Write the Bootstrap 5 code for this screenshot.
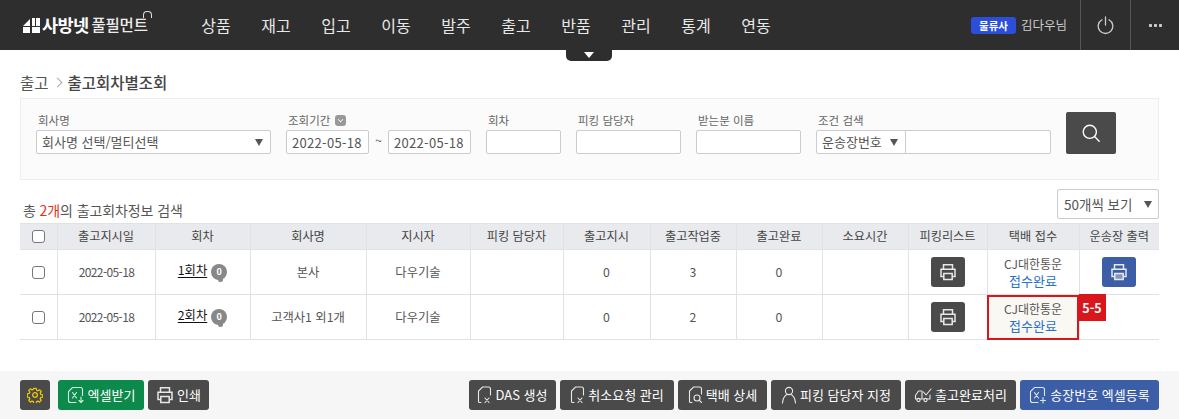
<!DOCTYPE html>
<html lang="ko">
<head>
<meta charset="utf-8">
<title>출고회차별조회</title>
<link href="https://cdn.jsdelivr.net/npm/bootstrap@5.3.0/dist/css/bootstrap.min.css" rel="stylesheet">
<style>
html,body{height:419px;overflow:hidden}
body{font-family:"Noto Sans CJK KR","Noto Sans",sans-serif;font-size:12px;color:#555;background:#fff}
.page-wrap{height:419px}
.top-bar{height:50px;background:#2e2e2e;color:#fff;padding:0}
.logo-box{width:190px;padding-left:23px;gap:2px}
.logo-main{font-size:17.5px;font-weight:700;letter-spacing:-.6px;line-height:1}
.logo-sub{font-size:15.5px;font-weight:500;letter-spacing:-.2px;line-height:1;color:#ececec;position:relative;margin-left:1px}
.logo-sub::after{content:"";position:absolute;right:-4px;top:-6px;width:9px;height:7px;border:1px solid #ddd;border-bottom:0;border-radius:4px 4px 0 0}
.main-menu{margin-left:-4px}
.main-menu .nav-link{width:60px;padding:0;text-align:center;font-size:16px;color:#e8e8e8;line-height:50px;white-space:nowrap}
.corp-tag{width:45px;height:17px;background:#2b4fd8;color:#fff;border-radius:3px;font-size:10.5px;font-weight:700;line-height:17px;text-align:center}
.user-name{font-size:12.5px;color:#ccc;margin-left:5px;margin-right:13px;white-space:nowrap}
.bar-cell{width:50px;height:50px;border-left:1px solid #555}
.bar-cell.last-cell{width:49px}
.menu-tab{position:absolute;left:566px;top:50px;width:46px;height:11px;background:#2e2e2e;border-radius:0 0 5px 5px}
.menu-tab::after{content:"";position:absolute;left:18px;top:2px;border-left:5px solid transparent;border-right:5px solid transparent;border-top:6px solid #fff}
.crumbs{padding:21px 20px 0;height:48px;font-size:15.5px;color:#555;line-height:22px;gap:5px}
.crumbs strong{font-weight:500;color:#444}
.crumb-sep{width:7px;height:7px;border-top:1px solid #aaa;border-right:1px solid #aaa;transform:rotate(45deg);margin-right:2px}
.search-box{margin:0 20px;height:82px;background:#fbfbfb;border:1px solid #eee;padding:12px 15px 0;gap:15px}
.search-box label{display:block;font-size:11.5px;line-height:19px;color:#666;white-space:nowrap;padding-left:2px}
.date-mark{display:inline-block;width:11px;height:11px;background:#999;border-radius:3px;vertical-align:-1px;margin-left:1px;position:relative}
.date-mark::after{content:"";position:absolute;left:3px;top:2px;width:5px;height:5px;border-right:1px solid #fff;border-bottom:1px solid #fff;transform:rotate(45deg) scale(.8)}
.fld{height:24px;border:1px solid #ccc;border-radius:2px;background-color:#fff;font-size:13px;color:#555;padding:0 5px;box-shadow:none;line-height:22px;min-height:0}
.form-select.fld{padding:0 5px;background-image:url("data:image/svg+xml,%3Csvg xmlns='http://www.w3.org/2000/svg' width='8' height='7'%3E%3Cpath d='M0 0h8L4 7z' fill='%23555'/%3E%3C/svg%3E");background-size:8px 7px;background-position:right 7px center}
.w-corp{width:235px}.w-date{width:83px;letter-spacing:.3px;font-size:13px}.w-round{width:75px}.w-pick{width:105px}.w-recv{width:105px}.w-cond{width:90px;border-radius:2px 0 0 2px}.w-kw{width:146px;margin-left:-1px;border-radius:0 2px 2px 0}
.tilde{width:19px;text-align:center;line-height:20px}
.date-pair{display:flex}
.find-btn{width:50px;height:42px;background:#4a4a4a;border:0;border-radius:2px;margin-top:1px;padding:0}
.find-btn:hover{background:#4a4a4a}
.list-head{height:43px;margin:0 20px}
.count-line{padding-left:3px;font-size:14px;line-height:18px;padding-bottom:4px;letter-spacing:-.1px}
.count-line em{font-style:normal;color:#e0301e}
.page-size{width:102px;height:30px;border:1px solid #ccc;border-radius:2px;font-size:13.5px;color:#555;padding:0 6px;margin-bottom:4px;background-image:url("data:image/svg+xml,%3Csvg xmlns='http://www.w3.org/2000/svg' width='8' height='7'%3E%3Cpath d='M0 0h8L4 7z' fill='%23555'/%3E%3C/svg%3E");background-size:8px 7px;background-position:right 6px center}
.grid-wrap{margin:0 20px}
.order-grid{table-layout:fixed;width:1139px;margin:0;border-color:#e2e2e2;--bs-table-color:#555;--bs-table-border-color:#e2e2e2}
.order-grid th{height:26px;background:#e9eaee;font-weight:400;font-size:12.2px;color:#444;padding:0;text-align:center;vertical-align:middle;border:1px solid #e2e2e2;border-left-color:#dcdcdc;white-space:nowrap}
.order-grid td{height:45px;padding:0;text-align:center;vertical-align:middle;border:1px solid #e2e2e2;font-size:12.3px;color:#555;position:relative}
.order-grid tr>:first-child{border-left:0}
.order-grid tr>:last-child{border-right:0}
.order-grid .form-check-input{width:13px;height:13px;margin:0;border:1px solid #777;border-radius:3px;display:block;margin:0 auto}
.order-grid td.date-txt{letter-spacing:-.6px;font-size:12px;padding-left:1px}
.round-link{color:#111;text-decoration:underline;text-underline-offset:2px;position:relative;top:-2px}
.talk-mark{display:inline-block;width:16px;height:16px;border-radius:50%;background:#888;color:#fff;font-size:9px;font-weight:700;line-height:16px;margin-left:4px;position:relative;top:-2px}
.talk-mark::after{content:"";position:absolute;left:7px;bottom:-2px;width:5px;height:4px;background:#888;border-radius:0 0 3px 3px}
.mini-btn{width:34px;height:30px;background:#4a4a4a;border:0;border-radius:3px;padding:0;display:inline-flex;align-items:center;justify-content:center;vertical-align:middle}
.mini-btn:hover{background:#4a4a4a}
.mini-btn.blue-btn,.mini-btn.blue-btn:hover{background:#3b5ea6}
.carrier{line-height:17px;display:block;font-size:12px}
.carrier a{color:#2a72c8;text-decoration:none;display:block;font-size:13px}
.order-grid td.flagged{background:#faf8f3;outline:2px solid #d9161c;outline-offset:-2px}
.flag-tag{position:absolute;left:100%;top:-1px;width:27px;height:27px;background:#d9161c;color:#fff;font-weight:700;font-size:12.5px;line-height:27px;text-align:center;z-index:2}
.action-bar{height:48px;background:#f6f6f6;padding:9px 20px;margin-top:auto}
.act-btn{height:30px;background:#4a4a4a;border:0;border-radius:3px;color:#fff;font-size:13px;padding:0;gap:3px;white-space:nowrap;line-height:30px}
.act-btn:hover{background:#4a4a4a;color:#fff}
.act-btn.go-green,.act-btn.go-green:hover{background:#0b8a4c}
.act-btn.go-blue,.act-btn.go-blue:hover{background:#3b5ea6}
.b-gear{width:30px}.b-xls{width:86px}.b-prt{width:61px}.b-das{width:87px}.b-cancel{width:114px}.b-detail{width:89px}.b-pick{width:130px}.b-done{width:111px}.b-upload{width:139px}
.act-left{gap:4px}.act-right{gap:4px}
.act-left .b-gear{margin-right:4px}
svg{display:block;flex:none}
</style>
</head>
<body>
<div class="page-wrap d-flex flex-column position-relative">
  <nav class="top-bar d-flex align-items-center">
    <div class="logo-box d-flex align-items-center">
      <svg width="17" height="15" viewBox="0 0 17 15"><path d="M0 15V9h7v6zM9 15V9h8v6zM0 8 7 1v7zM9 8V0h3v8zM13 8V0h4v8z" fill="#fff"/></svg>
      <span class="logo-main">사방넷</span><span class="logo-sub">풀필먼트</span>
    </div>
    <ul class="nav main-menu flex-nowrap">
      <li class="nav-item"><a class="nav-link" href="#">상품</a></li>
      <li class="nav-item"><a class="nav-link" href="#">재고</a></li>
      <li class="nav-item"><a class="nav-link" href="#">입고</a></li>
      <li class="nav-item"><a class="nav-link" href="#">이동</a></li>
      <li class="nav-item"><a class="nav-link" href="#">발주</a></li>
      <li class="nav-item"><a class="nav-link" href="#">출고</a></li>
      <li class="nav-item"><a class="nav-link" href="#">반품</a></li>
      <li class="nav-item"><a class="nav-link" href="#">관리</a></li>
      <li class="nav-item"><a class="nav-link" href="#">통계</a></li>
      <li class="nav-item"><a class="nav-link" href="#">연동</a></li>
    </ul>
    <div class="ms-auto d-flex align-items-center">
      <span class="corp-tag">물류사</span>
      <span class="user-name">김다우님</span>
      <div class="bar-cell d-flex align-items-center justify-content-center">
        <svg width="17" height="19" viewBox="0 0 17 19" fill="none" stroke="#ccc" stroke-width="1.3" stroke-linecap="round"><path d="M8.5 1v8M5 3.8a7.3 7.3 0 1 0 7 0"/></svg>
      </div>
      <div class="bar-cell last-cell d-flex align-items-center justify-content-center">
        <svg width="13" height="3" viewBox="0 0 13 3" fill="#ccc"><rect width="3" height="3" rx=".7"/><rect x="5" width="3" height="3" rx=".7"/><rect x="10" width="3" height="3" rx=".7"/></svg>
      </div>
    </div>
  </nav>
  <div class="menu-tab"></div>

  <div class="crumbs d-flex align-items-start">
    <span>출고</span><span class="crumb-sep mt-2"></span><strong>출고회차별조회</strong>
  </div>

  <form class="search-box d-flex" onsubmit="return false">
    <div>
      <label>회사명</label>
      <select class="form-select fld w-corp"><option>회사명 선택/멀티선택</option></select>
    </div>
    <div>
      <label>조회기간 <span class="date-mark"></span></label>
      <div class="date-pair">
        <input class="form-control fld w-date" value="2022-05-18"><span class="tilde">~</span><input class="form-control fld w-date" value="2022-05-18">
      </div>
    </div>
    <div><label>회차</label><input class="form-control fld w-round"></div>
    <div><label>피킹 담당자</label><input class="form-control fld w-pick"></div>
    <div><label>받는분 이름</label><input class="form-control fld w-recv"></div>
    <div>
      <label>조건 검색</label>
      <div class="d-flex">
        <select class="form-select fld w-cond"><option>운송장번호</option></select><input class="form-control fld w-kw">
      </div>
    </div>
    <button class="btn find-btn d-flex align-items-center justify-content-center" aria-label="검색">
      <svg width="18" height="18" viewBox="0 0 18 18" fill="none" stroke="#fff" stroke-width="1.4" stroke-linecap="round"><circle cx="7.8" cy="7.8" r="6.6"/><path d="m12.8 12.8 4.4 4.4"/></svg>
    </button>
  </form>

  <div class="list-head d-flex align-items-end justify-content-between">
    <div class="count-line">총 <em>2개</em>의 출고회차정보 검색</div>
    <select class="form-select page-size"><option>50개씩 보기</option></select>
  </div>

  <div class="grid-wrap">
    <table class="table order-grid">
      <colgroup>
        <col style="width:37px"><col style="width:98px"><col style="width:95px"><col style="width:116px"><col style="width:104px"><col style="width:93px"><col style="width:87px"><col style="width:86px"><col style="width:86px"><col style="width:86px"><col style="width:79px"><col style="width:92px"><col style="width:80px">
      </colgroup>
      <thead>
        <tr>
          <th><input class="form-check-input" type="checkbox" aria-label="전체선택"></th>
          <th>출고지시일</th><th>회차</th><th>회사명</th><th>지시자</th><th>피킹 담당자</th><th>출고지시</th><th>출고작업중</th><th>출고완료</th><th>소요시간</th><th>피킹리스트</th><th>택배 접수</th><th>운송장 출력</th>
        </tr>
      </thead>
      <tbody>
        <tr>
          <td><input class="form-check-input" type="checkbox" aria-label="선택"></td>
          <td class="date-txt">2022-05-18</td>
          <td><a class="round-link" href="#">1회차</a><span class="talk-mark">0</span></td>
          <td>본사</td><td>다우기술</td><td></td><td>0</td><td>3</td><td>0</td><td></td>
          <td><button class="btn mini-btn" aria-label="피킹리스트 인쇄"><svg width="18" height="18" viewBox="0 0 18 18" fill="none" stroke="#e8e8e8" stroke-width="1.5"><path d="M4.5 6V1.8h9V6M4.5 13.5H2V6.2h14v7.3h-2.5"/><rect x="4.8" y="10.5" width="8.4" height="6" fill="#4a4a4a"/></svg></button></td>
          <td><span class="carrier">CJ대한통운<a href="#">접수완료</a></span></td>
          <td><button class="btn mini-btn blue-btn" aria-label="운송장 인쇄"><svg width="18" height="18" viewBox="0 0 18 18" fill="none" stroke="#e8e8e8" stroke-width="1.5"><path d="M4.5 6V1.8h9V6M4.5 13.5H2V6.2h14v7.3h-2.5"/><rect x="4.8" y="10.5" width="8.4" height="6" fill="#7f96c6"/></svg></button></td>
        </tr>
        <tr>
          <td><input class="form-check-input" type="checkbox" aria-label="선택"></td>
          <td class="date-txt">2022-05-18</td>
          <td><a class="round-link" href="#">2회차</a><span class="talk-mark">0</span></td>
          <td>고객사1 외1개</td><td>다우기술</td><td></td><td>0</td><td>2</td><td>0</td><td></td>
          <td><button class="btn mini-btn" aria-label="피킹리스트 인쇄"><svg width="18" height="18" viewBox="0 0 18 18" fill="none" stroke="#e8e8e8" stroke-width="1.5"><path d="M4.5 6V1.8h9V6M4.5 13.5H2V6.2h14v7.3h-2.5"/><rect x="4.8" y="10.5" width="8.4" height="6" fill="#4a4a4a"/></svg></button></td>
          <td class="flagged"><span class="carrier">CJ대한통운<a href="#">접수완료</a></span><span class="flag-tag">5-5</span></td>
          <td></td>
        </tr>
      </tbody>
    </table>
  </div>

  <div class="action-bar d-flex justify-content-between">
    <div class="act-left d-flex">
      <button class="btn act-btn b-gear d-flex align-items-center justify-content-center" aria-label="설정">
        <svg width="16" height="16" viewBox="0 0 16 16" fill="none" stroke="#f0c800" stroke-width="1.3" stroke-linejoin="round"><circle cx="8" cy="8" r="2.3"/><path d="M6.7 1h2.6l.4 2 1.4.6 1.7-1.1 1.8 1.8-1.1 1.7.6 1.4 2 .4v2.4l-2 .4-.6 1.4 1.1 1.7-1.8 1.8-1.7-1.1-1.4.6-.4 2H6.7l-.4-2-1.4-.6-1.7 1.1-1.8-1.8 1.1-1.7-.6-1.4-2-.4V6.8l2-.4.6-1.4-1.1-1.7 1.8-1.8 1.7 1.1 1.4-.6z" transform="translate(.4 .4) scale(.95)"/></svg>
      </button>
      <button class="btn act-btn go-green b-xls d-flex align-items-center justify-content-center">
        <svg width="18" height="18" viewBox="0 0 18 18" fill="none" stroke="#dfeee6" stroke-width="1.1" stroke-linecap="round"><path d="M9 16.5H3.5a2 2 0 0 1-2-2v-9l4-4h8a2 2 0 0 1 2 2v6"/><path d="m5.5 6.5 4 5.5M9.5 6.5l-4 5.500M14 11v5.500M12 14.500l2 2 2-2"/></svg>
        <span>엑셀받기</span>
      </button>
      <button class="btn act-btn b-prt d-flex align-items-center justify-content-center">
        <svg width="18" height="18" viewBox="0 0 18 18" fill="none" stroke="#e8e8e8" stroke-width="1.5"><path d="M4.5 6V1.8h9V6M4.5 13.5H2V6.2h14v7.3h-2.5"/><rect x="4.8" y="10.5" width="8.4" height="6" fill="#4a4a4a"/></svg>
        <span>인쇄</span>
      </button>
    </div>
    <div class="act-right d-flex">
      <button class="btn act-btn b-das d-flex align-items-center justify-content-center">
        <svg width="15" height="18" viewBox="0 0 15 18" fill="none" stroke="#e8e8e8" stroke-width="1.1" stroke-linecap="round"><path d="M4 16.5H2.5a1 1 0 0 1-1-1V5l4-4h6a2 2 0 0 1 2 2v6"/><path d="m8 12 4 4.5M12 12l-4 4.5"/></svg>
        <span>DAS 생성</span>
      </button>
      <button class="btn act-btn b-cancel d-flex align-items-center justify-content-center">
        <svg width="15" height="18" viewBox="0 0 15 18" fill="none" stroke="#e8e8e8" stroke-width="1.1" stroke-linecap="round"><path d="M4 16.5H2.5a1 1 0 0 1-1-1V5l4-4h6a2 2 0 0 1 2 2v6"/><path d="m8 12 4 4.5M12 12l-4 4.5"/></svg>
        <span>취소요청 관리</span>
      </button>
      <button class="btn act-btn b-detail d-flex align-items-center justify-content-center">
        <svg width="15" height="18" viewBox="0 0 15 18" fill="none" stroke="#e8e8e8" stroke-width="1.1" stroke-linecap="round"><path d="M4 16.5H2.5a1 1 0 0 1-1-1V5l4-4h6a2 2 0 0 1 2 2v5"/><circle cx="9" cy="12" r="3"/><path d="m11.2 14.2 2.3 2.3"/></svg>
        <span>택배 상세</span>
      </button>
      <button class="btn act-btn b-pick d-flex align-items-center justify-content-center">
        <svg width="16" height="18" viewBox="0 0 16 18" fill="none" stroke="#e8e8e8" stroke-width="1.1" stroke-linecap="round"><circle cx="8" cy="5" r="3.6"/><path d="M1.5 17c.3-4 2-7 4-8.300M14.5 17c-.3-4-2-7-4-8.300"/></svg>
        <span>피킹 담당자 지정</span>
      </button>
      <button class="btn act-btn b-done d-flex align-items-center justify-content-center">
        <svg width="18" height="18" viewBox="0 0 18 18" fill="none" stroke="#e8e8e8" stroke-width="1.1" stroke-linecap="round" stroke-linejoin="round"><path d="M3 13H1.5V9.5L4.5 5H8v8H6"/><circle cx="4.5" cy="14" r="1.6"/><circle cx="11.5" cy="14" r="1.6"/><path d="M9 13h1M13 13h3V9"/><path d="m9.500 6 2.500 3 5-6"/></svg>
        <span>출고완료처리</span>
      </button>
      <button class="btn act-btn go-blue b-upload d-flex align-items-center justify-content-center">
        <svg width="18" height="18" viewBox="0 0 18 18" fill="none" stroke="#dfe6f3" stroke-width="1.1" stroke-linecap="round"><path d="M9 16.5H3.500a2 2 0 0 1-2-2v-9l4-4h8a2 2 0 0 1 2 2v6"/><path d="m5.5 6.5 4 5.500M9.5 6.5l-4 5.500M14 11.500v5.500M11.500 14.500h5"/></svg>
        <span>송장번호 엑셀등록</span>
      </button>
    </div>
  </div>
</div>
<script src="https://cdn.jsdelivr.net/npm/bootstrap@5.3.0/dist/js/bootstrap.bundle.min.js"></script>
</body>
</html>
